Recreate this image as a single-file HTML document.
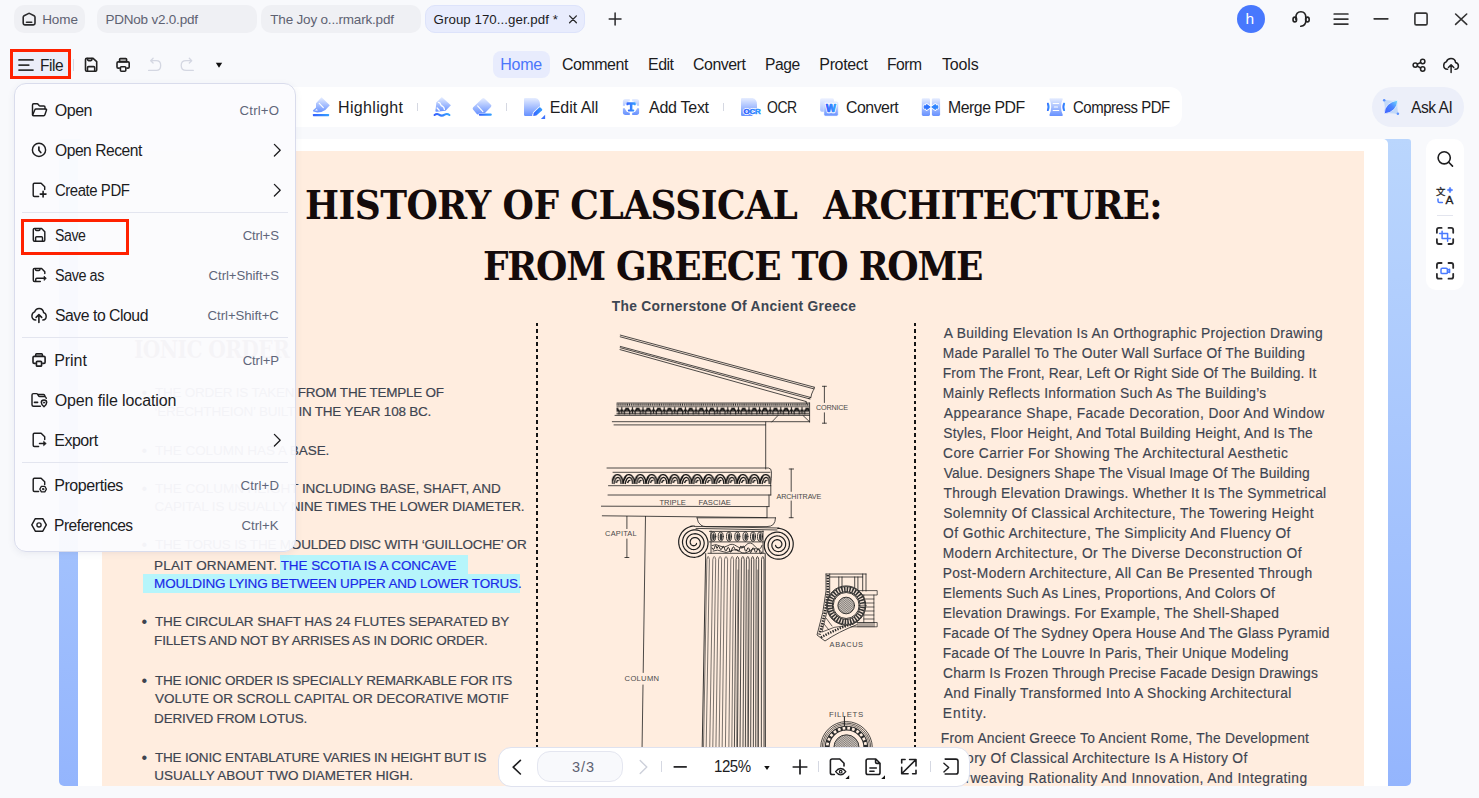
<!DOCTYPE html>
<html lang="en">
<head>
<meta charset="utf-8">
<title>PDNob</title>
<style>
*{box-sizing:border-box;margin:0;padding:0}
html,body{width:1479px;height:798px;overflow:hidden}
body{background:#f8f9fc;font-family:"Liberation Sans",sans-serif;color:#1c1c1e;position:relative}
.abs{position:absolute}
.layer{position:absolute;left:0;top:0;width:1479px;height:798px}
.t{position:absolute;white-space:pre;line-height:1;color:#1c1c1e}
svg{position:absolute;display:block;overflow:visible}
.tab{position:absolute;top:5px;height:28px;border-radius:10px;background:#eff0f4}
.sep{position:absolute;width:1px;background:#d5d8e2}
.bl{position:absolute;top:139px;height:647px;background:linear-gradient(180deg,#bad6fd 0%,#a9c7fd 45%,#94b5fd 100%)}
.hl{position:absolute;background:#b6f5fb}
.hr{position:absolute;left:22px;width:266px;height:1px;background:#e3e5ef}
.red{position:absolute;border:3px solid #ff2100}
.k{fill:none;stroke-linecap:round;stroke-linejoin:round}
</style>
</head>
<body>

<!-- ================= title bar ================= -->
<div class="tab" style="left:14px;width:71px"></div>
<div class="tab" style="left:97px;width:160px"></div>
<div class="tab" style="left:261px;width:160px"></div>
<div class="tab" style="left:425px;width:160px;background:#e8ecfd;border:1px solid #dde3fb"></div>
<!--ICONS:title-->

<!-- ================= row 2 ================= -->
<div class="abs" style="left:12px;top:51px;width:58px;height:26px;border-radius:5px;background:#eceef9"></div>
<div class="abs" style="left:493px;top:51px;width:57px;height:27px;border-radius:8px;background:#e8ecfd"></div>
<div class="sep" style="left:73px;top:59px;height:12px"></div>
<!--ICONS:row2-->

<!-- ================= toolbar ================= -->
<div class="abs" style="left:60px;top:87px;width:1122px;height:40px;border-radius:12px;background:#fff"></div>
<div class="abs" style="left:1372px;top:87px;width:92px;height:40px;border-radius:20px;background:#eceff9"></div>
<div class="sep" style="left:417px;top:103px;height:8px"></div>
<div class="sep" style="left:506px;top:103px;height:8px"></div>
<div class="sep" style="left:723px;top:103px;height:8px"></div>
<!--ICONS:toolbar-->

<!-- ================= document ================= -->
<div class="layer" style="clip-path:inset(139px 68px 12px 59px round 3px 3px 5px 5px)">
  <div class="bl" style="left:59px;width:1352px"></div>
  <div class="abs" style="left:78px;top:139px;width:1310px;height:660px;background:#fff;border-radius:5px 5px 0 0"></div>
  <div class="abs" style="left:101.7px;top:151px;width:1262.2px;height:640px;background:#ffeddf"></div>
  <div class="hl" style="left:280.4px;top:555.4px;width:187.6px;height:18.4px"></div>
  <div class="hl" style="left:143.1px;top:573.6px;width:377.2px;height:19.6px"></div>
  <!-- dotted rules -->
  <div class="abs" style="left:536px;top:322.8px;width:2px;height:470px;background:repeating-linear-gradient(180deg,#141414 0,#141414 3.4px,transparent 3.4px,transparent 6.5px)"></div>
  <div class="abs" style="left:914px;top:322.8px;width:2px;height:470px;background:repeating-linear-gradient(180deg,#141414 0,#141414 3.4px,transparent 3.4px,transparent 6.5px)"></div>
<svg class="layer" viewBox="0 0 1479 798" width="1479" height="798">
<defs>
<pattern id="pc" x="616.5" y="403" width="10.6" height="12.4" patternUnits="userSpaceOnUse"><path d="M0 1.6H10.6" stroke="#2a2a2a" stroke-width="2.2" stroke-dasharray="1.1 .7"/><path d="M0 3.6H10.6" stroke="#333" stroke-width=".8"/><path d="M0 5Q2.6 11.5 5.3 6Q8 11.5 10.6 5M.6 4.6L3 8.4M5.3 4V10.4M10 4.6L7.6 8.4M0 8H10.6M0 10.6H10.6M2.6 9V11.6M8 9V11.6" stroke="#151515" stroke-width="1.1" fill="none"/></pattern>
<pattern id="pa" x="611.8" y="472" width="11.4" height="14" patternUnits="userSpaceOnUse"><path d="M0 12Q1 2 6 2.6Q11 3.4 11.4 12M2 12Q3.4 5 6.4 5.4Q9 6 9.4 12M4.4 11Q5.4 7.6 7 8.6M.5 9L3 4M8 3L11 8" stroke="#111" stroke-width="1.3" fill="none"/></pattern>
<pattern id="ph" width="1.6" height="1.6" patternUnits="userSpaceOnUse" patternTransform="rotate(40)"><path d="M0 .5H1.6" stroke="#444" stroke-width=".55"/></pattern>
</defs>
<g fill="none" stroke="#1f1f1f" stroke-width=".8" stroke-linecap="round" stroke-linejoin="round">
<path d="M620.3 335.1L814.3 387.2M620.2 336.8L813.6 388.8M620.3 346.4L810.8 397.5M620.2 347.7L810 399M620 349.6L806 401.5"/>
<path d="M814.3 387.2Q815 388.5 813.2 390.5Q811.3 394 810.8 397.6L808.5 398.5M806 401.5L806.6 403.6" />
<rect x="616.5" y="403" width="193" height="12.2" fill="url(#pc)" stroke="none"/>
<path d="M617 403H809.6M615 415.4H809.6M612.3 421.7H809.6M614 424.9H765.6M809.6 403V422M803 415.5L809.4 421.6M778 415.5L771.8 422"/>
<path d="M765.7 422V469"/>
<path d="M824.4 386.3V402.5M824.4 412.8V423.2M822.4 386.3H826.4M822.4 423.2H826.4"/>
<path d="M607 468H768.5Q771.6 468.4 771.4 472Q771.6 478 770.6 485.6M608.5 485.7H770.8"/>
<rect x="611.8" y="472.4" width="159" height="13.2" fill="url(#pa)" stroke="none"/>
<path d="M613 472.3H770M770.8 485.6V495M608 495H770.8M769 495V506.4M601.4 506.2L769 506.6M767 506.6V517.4M602.3 515.8L767 517.6"/>
<path d="M791.2 469V491.4M791.2 501V517.7M789.2 469H793.6M789.2 517.7H793.2"/>
<path d="M626.9 516.4V528.6M626.9 539V557.5M624.9 557.5H628.9"/>
<path d="M645.5 516.4L643.2 672.5M643 685L641.4 792"/>
<path d="M697 517.8Q697.6 523 701 525.2Q703 526.6 706 526.6H767Q771 526.6 773.4 524.4Q775.4 522 775.5 517.9M697 517.8H775.5"/>
<path d="M694.5 526.4L779 528M696 528.4L777 530M709.4 531.4H763.3M709.4 541.9H763.3M708 553.3H764.5M711 531V553M763 531V553" stroke-width=".8"/>
<path d="M694.3 526.0L692.1 526.2L690.0 526.7L688.0 527.5L686.1 528.5L684.4 529.8L682.9 531.2L681.5 532.9L680.5 534.7L679.6 536.6L679.0 538.6L678.7 540.6L678.7 542.7L678.9 544.7L679.4 546.7L680.1 548.6L681.1 550.3L682.3 552.0L683.7 553.4L685.2 554.6L686.9 555.6L688.7 556.4L690.6 557.0L692.5 557.2L694.5 557.3L696.4 557.0L698.2 556.6L700.0 555.9L701.6 554.9L703.1 553.8L704.5 552.5L705.6 551.0L706.5 549.4L707.3 547.7L707.7 546.0L708.0 544.2L708.0 542.4L707.8 540.6L707.3 538.9L706.6 537.2L705.8 535.7L704.7 534.3L703.5 533.1L702.1 532.0L700.6 531.2L699.0 530.5L697.4 530.1L695.7 529.9L694.0 529.9L692.4 530.1L690.8 530.5L689.3 531.2L687.9 532.0L686.6 533.0L685.4 534.2L684.5 535.4L683.7 536.8L683.1 538.3L682.7 539.8L682.5 541.4L682.5 542.9L682.8 544.4L683.2 545.9L683.8 547.3L684.6 548.6L685.5 549.8L686.6 550.8L687.8 551.7L689.0 552.4L690.4 552.9L691.8 553.3L693.2 553.4L694.6 553.4L696.0 553.2L697.4 552.8L698.7 552.2L699.8 551.5L700.9 550.6L701.8 549.6L702.6 548.5L703.3 547.4L703.7 546.1L704.0 544.8L704.2 543.5L704.1 542.2L703.9 541.0L703.5 539.7L703.0 538.6L702.3 537.5L701.5 536.6L700.6 535.7L699.6 535.0L698.6 534.5L697.4 534.1L696.3 533.8L695.1 533.7L693.9 533.8L692.8 534.0L691.7 534.3L690.7 534.8L689.7 535.4L688.9 536.1L688.1 537.0L687.5 537.9L687.0 538.8L686.7 539.8L686.4 540.9L686.4 541.9L686.4 543.0L686.6 544.0L686.9 545.0L687.4 545.9L687.9 546.7L688.6 547.4L689.3 548.1L690.1 548.6L691.0 549.1L691.9 549.4L692.8 549.5L693.8 549.6L694.7 549.5L695.6 549.3L696.4 549.0L697.2 548.6L697.9 548.1L698.5 547.5L699.1 546.9L699.6 546.2L699.9 545.4L700.2 544.6L700.3 543.8L700.3 543.0L700.2 542.3L700.1 541.5L699.8 540.8L699.4 540.1L699.0 539.5L698.5 539.0L697.9 538.5L697.3 538.1L696.7 537.8L696.0 537.7L695.3 537.6L694.6 537.5L694.0 537.6L693.3 537.8L692.8 538.0L692.2 538.3L691.7 538.7L691.3 539.2L690.9 539.6L690.6 540.1L690.4 540.7L690.3 541.2L690.2 541.8L690.2 542.3L690.3 542.9L690.4 543.4L690.7 543.9L690.9 544.3L691.2 544.7L691.6 545.0L692.0 545.3L692.4 545.5L692.8 545.6L693.3 545.7L693.7 545.8L694.1 545.7L694.5 545.6L694.9 545.5L695.3 545.3L695.6 545.1L695.8 544.9L696.1 544.6L696.2 544.3L696.4 544.0L696.5 543.6L696.5 543.3" stroke-width="1.2"/>
<path d="M777.8 528.3L779.9 528.5L782.0 529.0L784.0 529.8L785.9 530.8L787.6 532.0L789.1 533.5L790.4 535.1L791.5 536.9L792.3 538.8L792.9 540.7L793.2 542.7L793.2 544.8L793.0 546.8L792.5 548.7L791.8 550.6L790.8 552.4L789.7 553.9L788.3 555.4L786.8 556.6L785.1 557.6L783.3 558.4L781.5 558.9L779.6 559.2L777.6 559.2L775.8 559.0L773.9 558.5L772.2 557.8L770.6 556.9L769.1 555.8L767.8 554.5L766.6 553.0L765.7 551.5L765.0 549.8L764.5 548.0L764.3 546.3L764.3 544.5L764.5 542.7L764.9 541.0L765.6 539.4L766.5 537.9L767.5 536.5L768.7 535.3L770.1 534.3L771.6 533.4L773.1 532.8L774.8 532.3L776.4 532.1L778.1 532.1L779.7 532.3L781.3 532.8L782.8 533.4L784.2 534.2L785.4 535.2L786.6 536.4L787.5 537.6L788.3 539.0L788.9 540.4L789.3 541.9L789.4 543.5L789.4 545.0L789.2 546.5L788.8 548.0L788.2 549.3L787.4 550.6L786.5 551.8L785.4 552.8L784.3 553.7L783.0 554.4L781.7 554.9L780.3 555.2L778.9 555.4L777.5 555.4L776.1 555.1L774.7 554.8L773.5 554.2L772.3 553.5L771.3 552.6L770.4 551.6L769.6 550.6L768.9 549.4L768.5 548.2L768.2 546.9L768.1 545.6L768.1 544.3L768.3 543.1L768.7 541.9L769.2 540.7L769.9 539.7L770.6 538.7L771.5 537.9L772.5 537.2L773.6 536.7L774.7 536.3L775.9 536.0L777.0 535.9L778.2 536.0L779.3 536.2L780.4 536.5L781.4 537.0L782.3 537.6L783.2 538.3L783.9 539.1L784.5 540.0L785.0 541.0L785.4 542.0L785.6 543.0L785.6 544.0L785.6 545.1L785.4 546.1L785.1 547.0L784.6 547.9L784.1 548.8L783.4 549.5L782.7 550.1L781.9 550.7L781.1 551.1L780.2 551.4L779.3 551.5L778.3 551.6L777.4 551.5L776.6 551.3L775.7 551.0L774.9 550.6L774.2 550.2L773.6 549.6L773.1 548.9L772.6 548.2L772.3 547.5L772.0 546.7L771.9 545.9L771.9 545.1L771.9 544.4L772.1 543.6L772.4 542.9L772.7 542.2L773.2 541.6L773.7 541.1L774.2 540.7L774.8 540.3L775.5 540.0L776.1 539.8L776.8 539.7L777.5 539.7L778.1 539.8L778.7 539.9L779.3 540.2L779.9 540.5L780.4 540.9L780.8 541.3L781.1 541.8L781.4 542.3L781.6 542.8L781.8 543.4L781.9 543.9L781.8 544.4L781.8 545.0L781.6 545.5L781.4 545.9L781.1 546.4L780.8 546.7L780.5 547.1L780.1 547.3L779.7 547.5L779.3 547.7L778.8 547.8L778.4 547.8L778.0 547.8L777.6 547.7L777.2 547.6L776.9 547.4L776.5 547.2L776.3 546.9L776.1 546.6L775.9 546.3L775.7 546.0L775.7 545.7L775.6 545.4" stroke-width="1.2"/>
<ellipse cx="713.2" cy="536.6" rx="2.5" ry="4.6" stroke-width=".9"/><ellipse cx="713.5" cy="536.8" rx="1.3" ry="3.5" stroke="none" fill="#3a3a3a"/>
<ellipse cx="720.7" cy="536.6" rx="2.5" ry="4.6" stroke-width=".9"/><ellipse cx="721.0" cy="536.8" rx="1.3" ry="3.5" stroke="none" fill="#3a3a3a"/>
<ellipse cx="729.0" cy="536.6" rx="2.5" ry="4.6" stroke-width=".9"/><ellipse cx="729.3" cy="536.8" rx="1.3" ry="3.5" stroke="none" fill="#3a3a3a"/>
<ellipse cx="737.3" cy="536.6" rx="2.5" ry="4.6" stroke-width=".9"/><ellipse cx="737.6" cy="536.8" rx="1.3" ry="3.5" stroke="none" fill="#3a3a3a"/>
<ellipse cx="745.4" cy="536.6" rx="2.5" ry="4.6" stroke-width=".9"/><ellipse cx="745.7" cy="536.8" rx="1.3" ry="3.5" stroke="none" fill="#3a3a3a"/>
<ellipse cx="753.0" cy="536.6" rx="2.5" ry="4.6" stroke-width=".9"/><ellipse cx="753.3" cy="536.8" rx="1.3" ry="3.5" stroke="none" fill="#3a3a3a"/>
<ellipse cx="760.0" cy="536.6" rx="2.5" ry="4.6" stroke-width=".9"/><ellipse cx="760.3" cy="536.8" rx="1.3" ry="3.5" stroke="none" fill="#3a3a3a"/>
<path d="M712 548q1.4 3.6 2.6 -0.6t2.4 1q1.4 -4 2.6 -0.6t2.4 0.5q1.4 -4 2.6 0.4t2.4 0.5q1.4 -4 2.6 0.8t2.4 -1q1.4 -4 2.6 -0.6t2.4 1q1.4 4.2 2.6 -0.6t2.4 -1q1.4 -4 2.6 0.8t2.4 1q1.4 -4 2.6 0.8t2.4 -1q1.4 -3.4 2.6 0.8t2.4 0.5q1.4 -4 2.6 0.8t2.4 0.5" stroke-width="1"/>
<path d="M712 545.5Q716 543.4 720 546T728 545.6T737 546.4T746 545.2T755 546.4T762 545.4M713 551Q718 549 722 551.4T731 551T740 551.6T750 550.6T761 551.4" stroke-width=".8"/>
<path d="M705.7 553.6L701.4 792M765.2 553.6L765.4 792" stroke-width=".9"/>
<path d="M702.7 792L706.9 559.5Q708.1 553.5 709.4 559.5L705.4 792" stroke-width="0.6"/>
<path d="M709.0 792L712.8 559.5Q714.2 553.5 715.7 559.5L712.1 792" stroke-width="0.6"/>
<path d="M715.3 792L718.6 559.5Q720.1 553.5 721.6 559.5L718.5 792" stroke-width="0.6"/>
<path d="M721.6 792L724.5 559.5Q726.0 553.5 727.6 559.5L724.9 792" stroke-width="0.6"/>
<path d="M728.4 792L730.8 559.5Q732.2 553.5 733.6 559.5L731.4 792" stroke-width="0.6"/>
<path d="M734.0 792L736.1 559.5Q737.5 553.5 738.9 559.5L737.1 792" stroke-width="0.8"/>
<path d="M736.1 792L737.9 570" stroke-width=".45"/>
<path d="M739.7 792L741.4 559.5Q742.8 553.5 744.2 559.5L742.7 792" stroke-width="0.8"/>
<path d="M745.1 792L746.4 559.5Q747.8 553.5 749.2 559.5L748.1 792" stroke-width="0.8"/>
<path d="M747.1 792L748.2 570" stroke-width=".45"/>
<path d="M750.5 792L751.4 559.5Q752.6 553.5 753.9 559.5L753.2 792" stroke-width="0.8"/>
<path d="M755.6 792L756.2 559.5Q757.5 553.5 758.7 559.5L758.3 792" stroke-width="0.8"/>
<path d="M757.3 792L757.7 570" stroke-width=".45"/>
<path d="M761.3 792L761.5 559.5Q762.8 553.5 764.0 559.5L764.0 792" stroke-width="0.8"/>
<path d="M826 574H866M829.7 574V592M838.8 577V589M842 577V588M854.7 577V589M857.9 577V591M862.7 574V591M866 574V591M829.7 577H862.7" stroke-width=".8"/>
<path d="M826 574V591Q824 612 817 635L825 641Q838 632 857 624.6" stroke-width=".8"/>
<path d="M827.8 575V591Q826 612 819.4 634.6" stroke="#2a2a2a" stroke-width="2.6" stroke-linecap="butt" stroke-dasharray="1.5 1.2"/>
<path d="M821 637.4Q836 629 854 623.2" stroke="#2a2a2a" stroke-width="2.4" stroke-linecap="butt" stroke-dasharray="1.4 1.2"/>
<path d="M829.7 592Q828 612 822 632Q834 626 846 625.6M826 618L832 626M824 624L829 630" stroke-width=".7"/>
<path d="M857 590.6H877.2V595H857M863.8 595V622.5M873.9 595V622.5M857 622.5H877.2V626.8H851M863.8 599H873.9M863.8 603H873.9M863.8 607H873.9M863.8 611H873.9M863.8 615H873.9M863.8 619H873.9M858 622.5V626.8M860 622.5V626.8M862 622.5V626.8M864 622.5V626.8M866 622.5V626.8M868 622.5V626.8M870 622.5V626.8M872 622.5V626.8M874 622.5V626.8" stroke-width=".7"/>
<circle cx="846.2" cy="605.5" r="19.6" fill="#ffeddf" stroke-width=".9"/><circle cx="846.2" cy="605.5" r="16.3" stroke-width="6" stroke="#333"/><circle cx="846.2" cy="605.5" r="16.3" stroke-width="4.2" stroke-linecap="butt" stroke-dasharray="1.2 1.5" stroke="#f4e2d5"/><circle cx="846.2" cy="605.5" r="13" stroke-width=".9" fill="#ffeddf"/><circle cx="846.2" cy="605.5" r="8.3" stroke-width=".9" fill="#ddd2c9"/><circle cx="846.2" cy="605.5" r="8.3" stroke="none" fill="url(#ph)"/>
<path d="M844.4 716.6V730" stroke-width="1"/>
<circle cx="846.5" cy="747.4" r="25.8" stroke-width=".8"/><circle cx="846.5" cy="747.4" r="24.2" stroke-width=".7"/><circle cx="846.5" cy="747.4" r="22.8" stroke-width=".6"/><circle cx="846.5" cy="747.4" r="19.3" stroke-width="4.8" stroke="#2d2d2d"/><circle cx="846.5" cy="747.4" r="19.3" stroke-width="2.7" stroke-linecap="butt" stroke-dasharray="2.7 2.1" stroke="#ffeddf"/><circle cx="846.5" cy="747.4" r="12.6" stroke-width=".9" fill="#ddd2c9"/><circle cx="846.5" cy="747.4" r="12.6" stroke="none" fill="url(#ph)"/>
</g></svg>
<span class="t" style="left:305.1px;top:185.0px;font-size:40px;letter-spacing:-0.544px;color:#140b0b;font-weight:bold;font-family:'DejaVu Serif Condensed','DejaVu Serif',serif;">HISTORY OF CLASSICAL</span>
<span class="t" style="left:823.3px;top:185.0px;font-size:40px;letter-spacing:-0.811px;color:#140b0b;font-weight:bold;font-family:'DejaVu Serif Condensed','DejaVu Serif',serif;">ARCHITECTURE:</span>
<span class="t" style="left:482.5px;top:246.0px;font-size:40px;letter-spacing:-1.200px;color:#140b0b;font-weight:bold;transform:scaleX(0.9994);transform-origin:0 0;font-family:'DejaVu Serif Condensed','DejaVu Serif',serif;">FROM GREECE TO ROME</span>
<span class="t" style="left:611.7px;top:300.0px;font-size:13.8px;letter-spacing:0.316px;color:#3d4652;font-weight:bold;">The Cornerstone Of Ancient Greece</span>
<span class="t" style="left:134.1px;top:339.0px;font-size:23.5px;letter-spacing:-0.705px;color:#6d5a4e;font-weight:bold;transform:scaleX(0.9579);transform-origin:0 0;font-family:'DejaVu Serif Condensed','DejaVu Serif',serif;">IONIC ORDER</span>
<span class="t" style="left:141.4px;top:384.0px;font-size:16.2px;color:#3d4450;">•</span>
<span class="t" style="left:154.9px;top:386.0px;font-size:13.5px;letter-spacing:-0.231px;color:#3d4450;-webkit-text-stroke:.18px;">THE ORDER IS TAKEN FROM THE TEMPLE OF</span>
<span class="t" style="left:154.4px;top:405.0px;font-size:13.5px;letter-spacing:-0.214px;color:#3d4450;-webkit-text-stroke:.18px;">‘ERECHTHEION’ BUILT IN THE YEAR 108 BC.</span>
<span class="t" style="left:141.4px;top:442.0px;font-size:16.2px;color:#3d4450;">•</span>
<span class="t" style="left:154.9px;top:444.0px;font-size:13.5px;letter-spacing:-0.052px;color:#3d4450;-webkit-text-stroke:.18px;">THE COLUMN HAS A BASE.</span>
<span class="t" style="left:141.4px;top:480.0px;font-size:16.2px;color:#3d4450;">•</span>
<span class="t" style="left:154.9px;top:482.0px;font-size:13.5px;letter-spacing:-0.028px;color:#3d4450;-webkit-text-stroke:.18px;">THE COLUMN HEIGHT INCLUDING BASE, SHAFT, AND</span>
<span class="t" style="left:154.5px;top:500.0px;font-size:13.5px;letter-spacing:-0.148px;color:#3d4450;-webkit-text-stroke:.18px;">CAPITAL IS USUALLY NINE TIMES THE LOWER DIAMETER.</span>
<span class="t" style="left:141.4px;top:536.0px;font-size:16.2px;color:#3d4450;">•</span>
<span class="t" style="left:154.9px;top:538.0px;font-size:13.5px;letter-spacing:-0.199px;color:#3d4450;-webkit-text-stroke:.18px;">THE TORUS IS THE MOULDED DISC WITH ‘GUILLOCHE’ OR</span>
<span class="t" style="left:154.1px;top:559.0px;font-size:13.5px;letter-spacing:0.169px;color:#3d4450;-webkit-text-stroke:.18px;">PLAIT ORNAMENT.</span>
<span class="t" style="left:280.7px;top:559.0px;font-size:13.5px;letter-spacing:-0.077px;color:#1a2ae8;-webkit-text-stroke:.18px;">THE SCOTIA IS A CONCAVE</span>
<span class="t" style="left:154.1px;top:577.0px;font-size:13.5px;letter-spacing:-0.187px;color:#1a2ae8;-webkit-text-stroke:.18px;">MOULDING LYING BETWEEN UPPER AND LOWER TORUS</span>
<span class="t" style="left:518.1px;top:577.0px;font-size:13.5px;color:#1a2ae8;-webkit-text-stroke:.18px;">.</span>
<span class="t" style="left:141.4px;top:613.0px;font-size:16.2px;color:#3d4450;">•</span>
<span class="t" style="left:154.9px;top:615.0px;font-size:13.5px;letter-spacing:-0.094px;color:#3d4450;-webkit-text-stroke:.18px;">THE CIRCULAR SHAFT HAS 24 FLUTES SEPARATED BY</span>
<span class="t" style="left:154.1px;top:634.0px;font-size:13.5px;letter-spacing:-0.198px;color:#3d4450;-webkit-text-stroke:.18px;">FILLETS AND NOT BY ARRISES AS IN DORIC ORDER.</span>
<span class="t" style="left:141.4px;top:672.0px;font-size:16.2px;color:#3d4450;">•</span>
<span class="t" style="left:154.9px;top:674.0px;font-size:13.5px;letter-spacing:-0.195px;color:#3d4450;-webkit-text-stroke:.18px;">THE IONIC ORDER IS SPECIALLY REMARKABLE FOR ITS</span>
<span class="t" style="left:155.1px;top:692.0px;font-size:13.5px;letter-spacing:-0.008px;color:#3d4450;-webkit-text-stroke:.18px;">VOLUTE OR SCROLL CAPITAL OR DECORATIVE MOTIF</span>
<span class="t" style="left:154.1px;top:712.0px;font-size:13.5px;letter-spacing:-0.160px;color:#3d4450;-webkit-text-stroke:.18px;">DERIVED FROM LOTUS.</span>
<span class="t" style="left:141.4px;top:749.0px;font-size:16.2px;color:#3d4450;">•</span>
<span class="t" style="left:154.9px;top:751.0px;font-size:13.5px;letter-spacing:-0.177px;color:#3d4450;-webkit-text-stroke:.18px;">THE IONIC ENTABLATURE VARIES IN HEIGHT BUT IS</span>
<span class="t" style="left:154.2px;top:769.0px;font-size:13.5px;letter-spacing:-0.013px;color:#3d4450;-webkit-text-stroke:.18px;">USUALLY ABOUT TWO DIAMETER HIGH.</span>
<span class="t" style="left:943.8px;top:327.0px;font-size:13.8px;letter-spacing:0.335px;color:#3d4450;-webkit-text-stroke:.15px;">A Building Elevation Is An Orthographic Projection Drawing</span>
<span class="t" style="left:942.7px;top:347.0px;font-size:13.8px;letter-spacing:0.255px;color:#3d4450;-webkit-text-stroke:.15px;">Made Parallel To The Outer Wall Surface Of The Building</span>
<span class="t" style="left:942.7px;top:367.0px;font-size:13.8px;letter-spacing:0.170px;color:#3d4450;-webkit-text-stroke:.15px;">From The Front, Rear, Left Or Right Side Of The Building. It</span>
<span class="t" style="left:942.7px;top:387.0px;font-size:13.8px;letter-spacing:0.257px;color:#3d4450;-webkit-text-stroke:.15px;">Mainly Reflects Information Such As The Building’s</span>
<span class="t" style="left:943.8px;top:407.0px;font-size:13.8px;letter-spacing:0.393px;color:#3d4450;-webkit-text-stroke:.15px;">Appearance Shape, Facade Decoration, Door And Window</span>
<span class="t" style="left:943.2px;top:427.0px;font-size:13.8px;letter-spacing:0.259px;color:#3d4450;-webkit-text-stroke:.15px;">Styles, Floor Height, And Total Building Height, And Is The</span>
<span class="t" style="left:943.1px;top:447.0px;font-size:13.8px;letter-spacing:0.404px;color:#3d4450;-webkit-text-stroke:.15px;">Core Carrier For Showing The Architectural Aesthetic</span>
<span class="t" style="left:943.7px;top:467.0px;font-size:13.8px;letter-spacing:0.163px;color:#3d4450;-webkit-text-stroke:.15px;">Value. Designers Shape The Visual Image Of The Building</span>
<span class="t" style="left:943.5px;top:487.0px;font-size:13.8px;letter-spacing:0.293px;color:#3d4450;-webkit-text-stroke:.15px;">Through Elevation Drawings. Whether It Is The Symmetrical</span>
<span class="t" style="left:943.2px;top:507.0px;font-size:13.8px;letter-spacing:0.398px;color:#3d4450;-webkit-text-stroke:.15px;">Solemnity Of Classical Architecture, The Towering Height</span>
<span class="t" style="left:943.1px;top:527.0px;font-size:13.8px;letter-spacing:0.403px;color:#3d4450;-webkit-text-stroke:.15px;">Of Gothic Architecture, The Simplicity And Fluency Of</span>
<span class="t" style="left:942.7px;top:547.0px;font-size:13.8px;letter-spacing:0.387px;color:#3d4450;-webkit-text-stroke:.15px;">Modern Architecture, Or The Diverse Deconstruction Of</span>
<span class="t" style="left:942.7px;top:567.0px;font-size:13.8px;letter-spacing:0.377px;color:#3d4450;-webkit-text-stroke:.15px;">Post-Modern Architecture, All Can Be Presented Through</span>
<span class="t" style="left:942.7px;top:587.0px;font-size:13.8px;letter-spacing:0.237px;color:#3d4450;-webkit-text-stroke:.15px;">Elements Such As Lines, Proportions, And Colors Of</span>
<span class="t" style="left:942.7px;top:607.0px;font-size:13.8px;letter-spacing:0.301px;color:#3d4450;-webkit-text-stroke:.15px;">Elevation Drawings. For Example, The Shell-Shaped</span>
<span class="t" style="left:942.7px;top:627.0px;font-size:13.8px;letter-spacing:0.201px;color:#3d4450;-webkit-text-stroke:.15px;">Facade Of The Sydney Opera House And The Glass Pyramid</span>
<span class="t" style="left:942.7px;top:647.0px;font-size:13.8px;letter-spacing:0.220px;color:#3d4450;-webkit-text-stroke:.15px;">Facade Of The Louvre In Paris, Their Unique Modeling</span>
<span class="t" style="left:943.1px;top:667.0px;font-size:13.8px;letter-spacing:0.174px;color:#3d4450;-webkit-text-stroke:.15px;">Charm Is Frozen Through Precise Facade Design Drawings</span>
<span class="t" style="left:943.8px;top:687.0px;font-size:13.8px;letter-spacing:0.373px;color:#3d4450;-webkit-text-stroke:.15px;">And Finally Transformed Into A Shocking Architectural</span>
<span class="t" style="left:942.7px;top:707.0px;font-size:13.8px;letter-spacing:1.046px;color:#3d4450;-webkit-text-stroke:.15px;">Entity.</span>
<span class="t" style="left:940.8px;top:732.0px;font-size:13.8px;letter-spacing:0.266px;color:#3d4450;-webkit-text-stroke:.15px;">From Ancient Greece To Ancient Rome, The Development</span>
<span class="t" style="left:940.8px;top:752.0px;font-size:13.8px;letter-spacing:0.380px;color:#3d4450;-webkit-text-stroke:.15px;">History Of Classical Architecture Is A History Of</span>
<span class="t" style="left:940.6px;top:772.0px;font-size:13.8px;letter-spacing:0.445px;color:#3d4450;-webkit-text-stroke:.15px;">Interweaving Rationality And Innovation, And Integrating</span>
<span class="t" style="left:815.8px;top:404.0px;font-size:7.6px;letter-spacing:-0.228px;color:#4a4a4a;transform:scaleX(0.9503);transform-origin:0 0;">CORNICE</span>
<span class="t" style="left:776.5px;top:493.0px;font-size:7.2px;letter-spacing:-0.108px;color:#4a4a4a;">ARCHITRAVE</span>
<span class="t" style="left:659.5px;top:499.0px;font-size:7.6px;letter-spacing:-0.038px;color:#4a4a4a;">TRIPLE</span>
<span class="t" style="left:698.4px;top:499.0px;font-size:7.6px;letter-spacing:0.063px;color:#4a4a4a;">FASCIAE</span>
<span class="t" style="left:605.1px;top:530.0px;font-size:7.4px;letter-spacing:0.211px;color:#4a4a4a;">CAPITAL</span>
<span class="t" style="left:624.6px;top:675.0px;font-size:7.6px;letter-spacing:0.300px;color:#4a4a4a;">COLUMN</span>
<span class="t" style="left:829.6px;top:641.0px;font-size:7.4px;letter-spacing:0.612px;color:#4a4a4a;">ABACUS</span>
<span class="t" style="left:829.0px;top:711.0px;font-size:7.8px;letter-spacing:0.555px;color:#4a4a4a;">FILLETS</span>
</div>

<!-- ================= right panel ================= -->
<div class="abs" style="left:1426px;top:139px;width:38px;height:151px;border-radius:10px;background:#fff"></div>
<div class="abs" style="left:1437px;top:215px;width:16px;height:1px;background:#e3e5ee"></div>
<!--ICONS:right-->

<!-- ================= bottom toolbar ================= -->
<div class="abs" style="left:497.5px;top:746.5px;width:472px;height:40px;border-radius:13px;background:#fff;border:1px solid #dfe2ef"></div>
<div class="abs" style="left:537px;top:751px;width:86px;height:31px;border-radius:13px;background:#f8f9fc;border:1px solid #e4e6f0"></div>
<div class="sep" style="left:661px;top:761px;height:11px"></div>
<div class="sep" style="left:818px;top:761px;height:11px"></div>
<div class="sep" style="left:929.5px;top:761px;height:11px"></div>
<!--ICONS:bottom-->

<svg class="layer" viewBox="0 0 1479 798" width="1479" height="798">
<defs>
<linearGradient id="gl" x1="0" y1="0" x2="0" y2="1"><stop offset="0" stop-color="#e6edff"/><stop offset="1" stop-color="#6791ff"/></linearGradient>
<linearGradient id="gl2" x1="0" y1="0" x2="0" y2="1"><stop offset="0" stop-color="#eef2ff"/><stop offset="1" stop-color="#a9c1ff"/></linearGradient>
<linearGradient id="gb" x1="0" y1="0" x2="1" y2="0"><stop offset="0" stop-color="#3560ff"/><stop offset="1" stop-color="#35a2ff"/></linearGradient>
<linearGradient id="gai" x1="0" y1="1" x2="1" y2="0"><stop offset="0" stop-color="#3a5cff"/><stop offset="0.55" stop-color="#4b86ff"/><stop offset="1" stop-color="#74e4ff"/></linearGradient>
</defs>
<!-- title bar -->
<g class="k" stroke-width="1.6" stroke="#2a2a2c">
<path d="M23.2 17.3Q23.2 16.3 24.1 15.8L28.3 13.6Q29.1 13.2 29.9 13.6L34.1 15.8Q35 16.3 35 17.3V23.3Q35 24.9 33.4 24.9H24.8Q23.2 24.9 23.2 23.3Z"/>
<path d="M26.5 22.3H31.7"/>
<path d="M569.6 15.9l6.8 6.8M576.4 15.9l-6.8 6.8" stroke-width="1.3"/>
<path d="M609.2 19H621M615.1 13.1V24.9" stroke-width="1.5"/>
</g>
<circle cx="1251" cy="19" r="14" fill="#4878fd"/>
<g class="k" stroke-width="1.6" stroke="#222">
<path d="M1295.9 19.4V17.6Q1295.9 11.7 1300.9 11.7Q1305.8 11.7 1305.8 17.6V21Q1305.8 25.6 1300.8 26.3"/>
<ellipse cx="1294.8" cy="19.5" rx="1.8" ry="2.4"/>
<ellipse cx="1307.4" cy="19.5" rx="1.8" ry="2.4"/>
</g>
<g class="k" stroke-width="1.7" stroke="#333" stroke-linecap="butt">
<path d="M1334.2 14H1347.9M1334.2 19.05H1347.9M1334.2 24.1H1347.9"/>
<path d="M1374.2 18.8H1387.8"/>
</g>
<rect x="1414.9" y="13.1" width="12.2" height="11.8" rx="1.4" class="k" stroke-width="1.6" stroke="#333"/>
<path d="M1455.6 14l11.1 10.4M1466.7 14l-11.1 10.4" class="k" stroke-width="1.6" stroke="#333"/>

<!-- row2 -->
<g class="k" stroke="#333" stroke-width="1.7" stroke-linecap="butt"><path d="M19 59.9H33M19 65.05H28.8M19 70.1H33"/></g>
<g class="k" stroke-width="1.6" stroke="#222">
<path d="M86.7 58.4H93.1L96.7 61.7V70.1Q96.7 71.3 95.5 71.3H86.7Q85.5 71.3 85.5 70.1V59.6Q85.5 58.4 86.7 58.4Z"/>
<path d="M87.6 58.6V59.6Q87.6 60.6 88.6 60.6H90.9Q91.9 60.6 91.9 59.6V58.6"/>
<path d="M87.5 71.2V67.7Q87.5 66.6 88.6 66.6H93.6Q94.7 66.6 94.7 67.7V71.2"/>
<path d="M119.3 68.1H118.2Q117 68.1 117 66.9V63.1Q117 61.9 118.2 61.9H128Q129.2 61.9 129.2 63.1V66.9Q129.2 68.1 128 68.1H126.9"/>
<path d="M119.6 61.8V59.3Q119.6 58.5 120.4 58.5H125.8Q126.6 58.5 126.6 59.3V61.8Z" fill="#a9a9a9"/>
<rect x="120.4" y="66.7" width="5.4" height="4.6" rx="1"/>
</g>
<g class="k" stroke="#d4d7e2" stroke-width="1.3">
<path d="M153.1 58.2L150.7 60.7L153.1 63M150.9 60.7H156.2Q160.7 60.7 160.7 65.5Q160.7 70.4 156.2 70.4H148.6"/>
<path d="M189.3 58.2L191.7 60.7L189.3 63M191.5 60.7H186.2Q181.2 60.7 181.2 65.5Q181.2 70.4 186.2 70.4H193.3"/>
</g>
<path d="M215.8 62.8H222.2L219 67.7Z" fill="#111"/>
<g class="k" stroke-width="1.5" stroke="#222">
<circle cx="1422.7" cy="61.5" r="2.2"/><circle cx="1415.3" cy="65.1" r="2.2"/><circle cx="1422.7" cy="69" r="2.2"/>
<path d="M1417.3 64.1L1420.7 62.5M1417.3 66.1L1420.7 68"/>
<path d="M1447.6 69.3C1444.9 69.3 1443.7 67.4 1443.7 65.6C1443.7 63.6 1445 62.2 1446.4 61.8C1447.1 59.8 1448.8 58.6 1451 58.6C1453.5 58.6 1455.3 60.2 1455.6 62.6C1457.3 63 1458.4 64.4 1458.4 66C1458.4 68 1457 69.3 1455 69.3"/>
<path d="M1451.1 72.6V65.2M1448.4 67.5L1451.1 64.8L1453.8 67.5"/>
</g>

<!-- toolbar icons -->
<!-- highlight -->
<path d="M321.5 97.3L329.8 105.3L325.3 110Q321.5 112.5 317.2 112.6L313.3 111.6Q312.5 110.9 313.3 110L316 107.4L316 103.3Z" fill="url(#gl)"/>
<path d="M319.2 103.4L323.3 107.7" stroke="#fff" stroke-width="1.1" stroke-linecap="round"/>
<path d="M315 110.6L316.7 109L317.9 110.6Z" fill="#fff"/>
<rect x="312.9" y="114" width="16.2" height="2.2" rx=".6" fill="url(#gb)"/>
<!-- squiggle -->
<path d="M441.8 97.1L450.9 105.3L445.6 110.7L436.3 111.8Q435.3 111.8 435.4 110.8L436.4 102.5Z" fill="url(#gl)"/>
<path d="M438.4 102.4Q440.2 102.7 440.7 104.6Q441.1 106 442.6 106.3Q444 106.8 444.4 109.4" stroke="#fff" stroke-width="1.4" fill="none" stroke-linecap="round"/>
<path d="M437.1 108L439.2 110.2" stroke="#fff" stroke-width="1.3" stroke-linecap="round"/>
<path d="M434.6 115Q436.8 113.2 439 114.6Q441.8 116.6 444.6 114.6Q447.2 113.2 449.4 115" stroke="url(#gb)" stroke-width="2.1" fill="none" stroke-linecap="round"/>
<!-- eraser -->
<path d="M482.3 98.6Q483.4 97.6 484.5 98.6L490.9 104.7Q492 105.8 490.9 106.9L485 112.9L479.6 113.1L478.2 114.3Q477.4 114.7 476.8 114L473 109.4Q472.2 108.3 473.2 107.3Z" fill="url(#gl)"/>
<path d="M477.6 105.9L482.9 111.6" stroke="#fff" stroke-width="1.1" stroke-linecap="round"/>
<rect x="478.8" y="113.4" width="13" height="2.4" rx="1.1" fill="url(#gb)"/>
<!-- edit all -->
<path d="M525 98H535.5Q540 99 540 104.5V107L532.5 114.2L532.4 115.9H525.2Q524 115.9 524 114.7V99.2Q524 98 525 98Z" fill="url(#gl)"/>
<path d="M533.3 115.9L533.6 112.9L539.2 107.5Q540 107 540.7 107.7L542 109Q542.6 109.8 542 110.5L536.4 115.6Z" fill="url(#gb)" stroke="#fff" stroke-width="1.5" paint-order="stroke" stroke-linejoin="round"/>
<path d="M540.9 118.9H545.1V114.7Z" fill="#3d73ff"/>
<!-- add text -->
<rect x="622.9" y="99" width="16.2" height="15.9" rx="2.6" fill="url(#gl)"/>
<path d="M631 98V116M621.9 107H640.1" stroke="#fff" stroke-width="2.4"/>
<ellipse cx="631" cy="107" rx="6.3" ry="6.1" fill="#fff"/>
<path d="M626.4 103.4Q626.4 102.3 627.5 102.3H634.7Q635.8 102.3 635.8 103.4V104.4Q635.8 105.3 634.8 105.3Q633.9 105.3 633.7 104.7H632.4V109.5H633.4Q634.3 109.5 634.3 110.5Q634.3 111.5 633.4 111.5H628.8Q627.8 111.5 627.8 110.5Q627.8 109.5 628.8 109.5H629.9V104.7H628.5Q628.3 105.3 627.4 105.3Q626.4 105.3 626.4 104.4Z" fill="url(#gb)"/>
<!-- OCR -->
<path d="M742 98H752.5Q757 99 757 104.5V110L752 115.9H742.2Q741 115.9 741 114.7V99.2Q741 98 742 98Z" fill="url(#gl)"/>
<text x="743.6" y="113.9" font-family="'Liberation Sans',sans-serif" font-weight="bold" font-size="7.9" letter-spacing="-0.2" fill="url(#gb)" stroke="#fff" stroke-width="2" paint-order="stroke" stroke-linejoin="round">OCR</text><text x="743.6" y="113.9" font-family="'Liberation Sans',sans-serif" font-weight="bold" font-size="7.9" letter-spacing="-0.2" fill="url(#gb)" stroke="url(#gb)" stroke-width=".35">OCR</text>
<!-- convert -->
<rect x="820.1" y="98.2" width="13.9" height="13.5" rx="1.6" fill="url(#gl2)"/>
<rect x="824" y="101.8" width="14.1" height="14.1" rx="1.6" fill="url(#gl)" stroke="#e3ebff" stroke-width=".5"/>
<text x="825.9" y="112.1" font-family="'Liberation Sans',sans-serif" font-weight="bold" font-size="10.4" fill="url(#gb)" stroke="#fff" stroke-width="2.4" paint-order="stroke" stroke-linejoin="round">W</text><text x="825.9" y="112.1" font-family="'Liberation Sans',sans-serif" font-weight="bold" font-size="10.4" fill="url(#gb)" stroke="url(#gb)" stroke-width=".7" stroke-linejoin="round">W</text>
<!-- merge -->
<rect x="921.8" y="98.2" width="8.2" height="17.7" rx="1.4" fill="url(#gl)"/>
<rect x="931.9" y="98.2" width="8.2" height="17.7" rx="1.4" fill="url(#gl)"/>
<path d="M924.2 105.9H926.7V104.6L930 107L926.7 109.4V108.1H924.2Z" fill="#fff" stroke="#fff" stroke-width="2.8" stroke-linejoin="round"/><path d="M924.2 105.9H926.7V104.6L930 107L926.7 109.4V108.1H924.2Z" fill="#2f74ff" stroke="#2f74ff" stroke-width="1.1" stroke-linejoin="round"/>
<path d="M937.8 105.9H935.3V104.6L932 107L935.3 109.4V108.1H937.8Z" fill="#fff" stroke="#fff" stroke-width="2.8" stroke-linejoin="round"/><path d="M937.8 105.9H935.3V104.6L932 107L935.3 109.4V108.1H937.8Z" fill="#2f85ff" stroke="#2f85ff" stroke-width="1.1" stroke-linejoin="round"/>
<!-- compress -->
<path d="M1049.4 99Q1049.4 98.2 1050.2 98.2H1062Q1062.8 98.2 1062.8 99Q1061 103 1061 107Q1061 111 1062.8 115Q1062.8 115.9 1062 115.9H1050.2Q1049.4 115.9 1049.4 115Q1051.2 111 1051.2 107Q1051.2 103 1049.4 99Z" fill="url(#gl)"/>
<path d="M1053.2 103.5H1058.7M1054.4 107H1057.5M1053.2 110.5H1058.7" stroke="#fff" stroke-width="1.2" stroke-linecap="round"/>
<path d="M1046.9 103.4Q1046.9 102.8 1047.6 102.8H1048.6Q1050.6 107 1048.6 111.1H1047.6Q1046.9 111.1 1046.9 110.5Q1048.2 107 1046.9 103.4Z" fill="url(#gb)"/>
<path d="M1065.1 103.4Q1065.1 102.8 1064.4 102.8H1063.4Q1061.4 107 1063.4 111.1H1064.4Q1065.1 111.1 1065.1 110.5Q1063.8 107 1065.1 103.4Z" fill="url(#gb)"/>
<!-- ask ai -->
<path d="M1383.5 99.6Q1391 101.6 1397.9 100.1Q1396.4 107 1398.6 114.4Q1391 112.5 1384.2 113.8Q1385.7 107 1383.5 99.6Z" fill="#c2d9f8"/>
<circle cx="1384.2" cy="100.2" r="1.25" fill="#5c93ff"/><circle cx="1397.9" cy="113.7" r="1.25" fill="#5c93ff"/>
<path d="M1384.2 113.9Q1384.4 102.6 1397.9 100Q1397 112.2 1384.2 113.9Z" fill="url(#gai)" stroke="#f6f8fe" stroke-width=".8"/>

<!-- right panel -->
<g class="k" stroke-width="1.6" stroke="#1d1d1f">
<circle cx="1444.2" cy="157.8" r="6.1"/><path d="M1448.7 162.3L1452.5 166.1"/>
</g>
<text x="1435.9" y="195" font-family="'Liberation Sans','Noto Sans CJK SC',sans-serif" font-size="9.4" fill="#1d1d1f" stroke="#1d1d1f" stroke-width=".3">文</text>
<text x="1445.4" y="203.6" font-family="'Liberation Sans',sans-serif" font-size="11.8" fill="#1d1d1f" stroke="#1d1d1f" stroke-width=".35">A</text>
<path d="M1450 187.1Q1450.4 189.6 1452.9 190Q1450.4 190.4 1450 192.9Q1449.6 190.4 1447.1 190Q1449.6 189.6 1450 187.1Z" fill="#4a7bff" stroke="#4a7bff" stroke-width=".6"/>
<path d="M1438 199V201Q1438 202.6 1439.6 202.6H1442.4" class="k" stroke="#4a7bff" stroke-width="1.5"/>
<g class="k" stroke-width="1.8" stroke="#2a2a2c">
<path d="M1436.9 232.8V229.9Q1436.9 227.9 1438.9 227.9H1441.6M1448.5 227.9H1451.2Q1453.2 227.9 1453.2 229.9V232.8M1453.2 239.1V242Q1453.2 244 1451.2 244H1448.5M1441.6 244H1438.9Q1436.9 244 1436.9 242V239.1"/>
<path d="M1436.9 267.9V265Q1436.9 263 1438.9 263H1441.6M1448.5 263H1451.2Q1453.2 263 1453.2 265V267.9M1453.2 273.8V276.7Q1453.2 278.7 1451.2 278.7H1448.5M1441.6 278.7H1438.9Q1436.9 278.7 1436.9 276.7V273.8"/>
</g>
<g class="k" stroke-width="1.5" stroke="#4a7bff">
<path d="M1442.1 231.2V238.6H1450.4M1439.6 233.6H1447.6V241.2"/>
<rect x="1441" y="268.2" width="6.4" height="5.4" rx="1.2"/><path d="M1447.6 270L1449.6 269.2V272.6L1447.6 271.8"/>
</g>

<!-- bottom toolbar -->
<g class="k" stroke-width="1.6" stroke="#1d1d1f">
<path d="M520.4 760.4L513.2 767.2L520.4 774"/>
<path d="M640.2 760.6L646.8 767.1L640.2 773.6" stroke="#cdd0da" stroke-width="1.4"/>
<path d="M673.6 766.9H686.8" stroke-linecap="butt" stroke-width="1.7"/>
<path d="M792.6 767H807.4M800 759.6V774.4" stroke-linecap="butt" stroke-width="1.7"/>
<path d="M844 766V763.2L839.8 759H832.2Q830.4 759 830.4 760.8V772.7Q830.4 774.5 832.2 774.5H834.3"/>
<path d="M835.6 771.7Q838 768.5 840.7 768.5Q843.4 768.5 845.8 771.7Q843.4 774.9 840.7 774.9Q838 774.9 835.6 771.7Z" stroke-width="1.3"/>
<circle cx="840.7" cy="771.7" r="1.3" stroke-width="1.2"/>
<path d="M875.8 759H867.9Q866.1 759 866.1 760.8V772.7Q866.1 774.5 867.9 774.5H878.2Q880 774.5 880 772.7V763.2ZM875.6 759.3V762.2Q875.6 763.4 876.8 763.4H879.7"/>
<path d="M869.8 768H876.4M869.8 771.2H874.1" stroke-width="1.4"/>
<path d="M909.6 759.5H916V765.9M916 759.5L901.7 773.7M901.7 767.4V773.7H908.1M901.7 762.9V759.5H905.1M916 770.3V773.7H912.6"/>
<path d="M943.9 763.2L948.7 767.5L943.9 771.9" stroke-width="1.4"/>
<path d="M945.2 759.1H955.9Q958 759.1 958 761.2V771.9Q958 774 955.9 774H945.2"/>
</g>
<path d="M845.4 779H849.2V775.2Z" fill="#111"/>
<path d="M881.2 779H885V775.2Z" fill="#111"/>
<path d="M764.2 766H769.7L767 770Z" fill="#111"/>
</svg>

<span class="t" style="left:42.2px;top:13.0px;font-size:13.5px;letter-spacing:-0.101px;color:#5e6272;">Home</span>
<span class="t" style="left:105.4px;top:13.0px;font-size:13.5px;letter-spacing:-0.209px;color:#5e6272;">PDNob v2.0.pdf</span>
<span class="t" style="left:270.3px;top:13.0px;font-size:13.5px;letter-spacing:-0.193px;color:#5e6272;">The Joy o...rmark.pdf</span>
<span class="t" style="left:433.6px;top:13.0px;font-size:13.3px;letter-spacing:0.041px;">Group 170...ger.pdf *</span>
<span class="t" style="left:1245.4px;top:11.0px;font-size:15.5px;color:#ffffff;">h</span>
<span class="t" style="left:39.5px;top:58.0px;font-size:16px;letter-spacing:-0.480px;transform:scaleX(0.9678);transform-origin:0 0;">File</span>
<span class="t" style="left:500.3px;top:57.0px;font-size:16px;letter-spacing:-0.252px;color:#4a76fb;">Home</span>
<span class="t" style="left:561.5px;top:57.0px;font-size:16px;letter-spacing:-0.480px;transform:scaleX(0.9978);transform-origin:0 0;">Comment</span>
<span class="t" style="left:647.5px;top:57.0px;font-size:16px;letter-spacing:-0.480px;transform:scaleX(0.9959);transform-origin:0 0;">Edit</span>
<span class="t" style="left:693.3px;top:57.0px;font-size:16px;letter-spacing:-0.480px;transform:scaleX(0.9940);transform-origin:0 0;">Convert</span>
<span class="t" style="left:765.2px;top:57.0px;font-size:16px;letter-spacing:-0.480px;transform:scaleX(0.9763);transform-origin:0 0;">Page</span>
<span class="t" style="left:819.3px;top:57.0px;font-size:16px;letter-spacing:-0.343px;">Protect</span>
<span class="t" style="left:887.1px;top:57.0px;font-size:16px;letter-spacing:-0.480px;transform:scaleX(0.9785);transform-origin:0 0;">Form</span>
<span class="t" style="left:942.0px;top:57.0px;font-size:16px;letter-spacing:-0.179px;">Tools</span>
<span class="t" style="left:338.0px;top:100.0px;font-size:16px;letter-spacing:0.346px;">Highlight</span>
<span class="t" style="left:549.7px;top:100.0px;font-size:16px;letter-spacing:-0.031px;">Edit All</span>
<span class="t" style="left:649.0px;top:100.0px;font-size:16px;letter-spacing:-0.273px;">Add Text</span>
<span class="t" style="left:767.3px;top:100.0px;font-size:16px;letter-spacing:-0.480px;transform:scaleX(0.8733);transform-origin:0 0;">OCR</span>
<span class="t" style="left:846.3px;top:100.0px;font-size:16px;letter-spacing:-0.480px;transform:scaleX(0.9902);transform-origin:0 0;">Convert</span>
<span class="t" style="left:948.0px;top:100.0px;font-size:16px;letter-spacing:-0.480px;transform:scaleX(0.9894);transform-origin:0 0;">Merge PDF</span>
<span class="t" style="left:1073.2px;top:100.0px;font-size:16px;letter-spacing:-0.480px;transform:scaleX(0.9345);transform-origin:0 0;">Compress PDF</span>
<span class="t" style="left:1411.3px;top:100.0px;font-size:16px;letter-spacing:-0.480px;transform:scaleX(0.9734);transform-origin:0 0;">Ask AI</span>
<span class="t" style="left:571.9px;top:760.0px;font-size:14.5px;letter-spacing:1.016px;color:#5e6272;">3/3</span>
<span class="t" style="left:714.4px;top:759.0px;font-size:16px;letter-spacing:-0.480px;transform:scaleX(0.9418);transform-origin:0 0;">125%</span>

<!-- ================= file menu ================= -->
<div class="abs" style="left:14px;top:83px;width:282px;height:468.5px;border-radius:12px;background:rgba(251,251,254,0.962);border:1px solid #d9dcec;box-shadow:0 2px 7px rgba(70,80,120,0.08)"></div>
<div class="hr" style="top:212px"></div>
<div class="hr" style="top:337px"></div>
<div class="hr" style="top:462px"></div>
<svg class="layer" viewBox="0 0 1479 798" width="1479" height="798">
<g class="k" stroke-width="1.45" stroke="#1d1d1f">
<!-- open -->
<path d="M32.5 114.8V105Q32.5 103.8 33.7 103.8H37Q37.8 103.8 38.3 104.5L38.9 105.3Q39.3 105.9 40.1 105.9H43.8Q45 105.9 45 107.1V108.8"/>
<path d="M32.6 115Q32.8 115.7 33.7 115.7H43.7Q44.6 115.7 44.9 114.8L46.5 110.1Q46.8 108.9 45.6 108.9H36.1Q35.1 108.9 34.8 109.8L32.7 115Z"/>
<!-- recent -->
<circle cx="39" cy="149.9" r="6.6"/>
<path d="M38.9 147.1V150.3L40.8 152.5" stroke-width="1.7"/>
<!-- create pdf -->
<path id="pg" d="M44.7 189.4V186.8L41.1 183.3H34.4Q33.2 183.3 33.2 184.5V195.3Q33.2 196.5 34.4 196.5H38.6"/>
<path d="M40.3 194.1H46M43.1 191.3V196.9" stroke-width="1.6"/>
<!-- save -->
<path d="M34.5 228.4H41.6L44.8 231.7V240Q44.8 241.2 43.6 241.2H34.5Q33.3 241.2 33.3 240V229.6Q33.3 228.4 34.5 228.4Z"/>
<path d="M35.5 228.6V229.5Q35.5 230.5 36.5 230.5H38.9Q39.9 230.5 39.9 229.5V228.6"/>
<path d="M35.6 241.1V237.8Q35.6 236.7 36.7 236.7H41.4Q42.5 236.7 42.5 237.8V241.1"/>
<!-- save as -->
<path d="M44.8 273.5V271.7L41.6 268.4H34.5Q33.3 268.4 33.3 269.6V280.2Q33.3 281.4 34.5 281.4H40.3"/>
<path d="M35.5 268.6V269.5Q35.5 270.5 36.5 270.5H38.9Q39.9 270.5 39.9 269.5V268.6"/>
<path d="M35.7 281.3V279.4Q35.7 278.3 36.8 278.3H44.5"/>
<!-- cloud -->
<path d="M35.8 320C33 320 31.9 317.9 31.9 316.1C31.9 313.9 33.2 312.4 34.6 311.9C35.4 309.6 37 308.4 39.1 308.4C41.6 308.4 43.3 310.1 43.6 312.6C45.2 313 46.2 314.5 46.2 316.3C46.2 318.4 44.8 320 42.8 320"/>
<path d="M38.9 322.4V315M36.1 317.4L38.9 314.7L41.7 317.4" stroke-width="1.6"/>
<!-- print -->
<path d="M35.2 363.4H34.2Q33 363.4 33 362.2V357.6Q33 356.4 34.2 356.4H43.9Q45.1 356.4 45.1 357.6V362.2Q45.1 363.4 43.9 363.4H42.9" stroke-width="1.6"/>
<path d="M35.7 356.3V354.5Q35.7 353.7 36.5 353.7H41.6Q42.4 353.7 42.4 354.5V356.3Z" fill="#aeaeae"/>
<rect x="36.4" y="361.3" width="5.2" height="4.9" rx="1" stroke-width="1.7"/>
<!-- open file location -->
<path d="M40.4 406.2H33.5Q32 406.2 32 404.7V395.1Q32 393.6 33.5 393.6H36.4Q37.1 393.6 37.5 394.2L38.6 395.9Q38.9 396.4 39.6 396.4H44Q45.8 396.5 46.3 398.2"/>
<path d="M38 394.5H43.6Q44.5 394.6 44.8 395.6L45 396.4"/>
<path d="M34.5 402.4H37.6" stroke-width="1.6"/>
<path d="M44 406.7Q41.3 404.6 41.3 402.6Q41.3 400 44 400Q46.7 400 46.7 402.6Q46.7 404.6 44 406.7Z"/>
<circle cx="44" cy="402.6" r=".7" fill="#1d1d1f" stroke-width=".8"/>
<!-- export -->
<path d="M44.7 439.4V436.8L41.1 433.3H34.4Q33.2 433.3 33.2 434.5V445.3Q33.2 446.5 34.4 446.5H38.6"/>
<path d="M39.5 443.5H44.5"/>
<!-- properties -->
<path d="M44.7 484.4V481.8L41.1 478.3H34.4Q33.2 478.3 33.2 479.5V490.3Q33.2 491.5 34.4 491.5H38.6"/>
<path d="M39.8 489.1L41.4 486.3H44.8L46.4 489.1L44.8 491.9H41.4Z" stroke-width="1.3"/>
<circle cx="43.1" cy="489.1" r=".8" fill="#1d1d1f" stroke-width=".8"/>
<!-- preferences -->
<path d="M31.8 524.9L35.3 518.7H42.8L46.3 524.9L42.8 531.2H35.3Z"/>
<circle cx="39" cy="524.9" r="2.1" stroke-width="1.35"/>
<!-- chevrons -->
<path d="M274.4 144.4L280.2 150.2L274.4 156" stroke-width="1.3"/>
<path d="M274.4 184.4L280.2 190.2L274.4 196" stroke-width="1.3"/>
<path d="M274.4 434.4L280.2 440.2L274.4 446" stroke-width="1.3"/>
</g>
<path d="M44 276.1L46.4 278.3L44 280.5Z" fill="#1d1d1f" stroke="#1d1d1f" stroke-width=".6" stroke-linejoin="round"/>
<path d="M43.6 441.2L46.3 443.5L43.6 445.8Z" fill="#1d1d1f" stroke="#1d1d1f" stroke-width=".6" stroke-linejoin="round"/>
</svg>

<span class="t" style="left:54.7px;top:103.0px;font-size:16px;letter-spacing:-0.448px;">Open</span>
<span class="t" style="left:239.6px;top:104.0px;font-size:13.2px;letter-spacing:0.187px;color:#5f667a;">Ctrl+O</span>
<span class="t" style="left:54.8px;top:143.0px;font-size:16px;letter-spacing:-0.480px;transform:scaleX(0.9751);transform-origin:0 0;">Open Recent</span>
<span class="t" style="left:54.7px;top:183.0px;font-size:16px;letter-spacing:-0.480px;transform:scaleX(0.9340);transform-origin:0 0;">Create PDF</span>
<span class="t" style="left:54.9px;top:228.0px;font-size:16px;letter-spacing:-0.480px;transform:scaleX(0.8842);transform-origin:0 0;">Save</span>
<span class="t" style="left:242.7px;top:229.0px;font-size:13.2px;letter-spacing:-0.146px;color:#5f667a;">Ctrl+S</span>
<span class="t" style="left:54.8px;top:268.0px;font-size:16px;letter-spacing:-0.480px;transform:scaleX(0.8988);transform-origin:0 0;">Save as</span>
<span class="t" style="left:208.6px;top:269.0px;font-size:13.2px;letter-spacing:-0.065px;color:#5f667a;">Ctrl+Shift+S</span>
<span class="t" style="left:54.8px;top:308.0px;font-size:16px;letter-spacing:-0.480px;transform:scaleX(0.9861);transform-origin:0 0;">Save to Cloud</span>
<span class="t" style="left:207.6px;top:309.0px;font-size:13.2px;letter-spacing:-0.050px;color:#5f667a;">Ctrl+Shift+C</span>
<span class="t" style="left:54.2px;top:353.0px;font-size:16px;letter-spacing:-0.042px;">Print</span>
<span class="t" style="left:242.7px;top:354.0px;font-size:13.2px;letter-spacing:-0.128px;color:#5f667a;">Ctrl+P</span>
<span class="t" style="left:54.7px;top:393.0px;font-size:16px;letter-spacing:-0.114px;">Open file location</span>
<span class="t" style="left:54.2px;top:433.0px;font-size:16px;letter-spacing:-0.463px;">Export</span>
<span class="t" style="left:54.2px;top:478.0px;font-size:16px;letter-spacing:-0.415px;">Properties</span>
<span class="t" style="left:240.5px;top:479.0px;font-size:13.2px;letter-spacing:0.154px;color:#5f667a;">Ctrl+D</span>
<span class="t" style="left:54.2px;top:518.0px;font-size:16px;letter-spacing:-0.480px;transform:scaleX(0.9714);transform-origin:0 0;">Preferences</span>
<span class="t" style="left:241.5px;top:519.0px;font-size:13.2px;color:#5f667a;">Ctrl+K</span>
<div class="red" style="left:10px;top:48.9px;width:61.4px;height:30.1px"></div>
<div class="red" style="left:21.2px;top:218.5px;width:107.8px;height:36.4px"></div>

</body>
</html>
